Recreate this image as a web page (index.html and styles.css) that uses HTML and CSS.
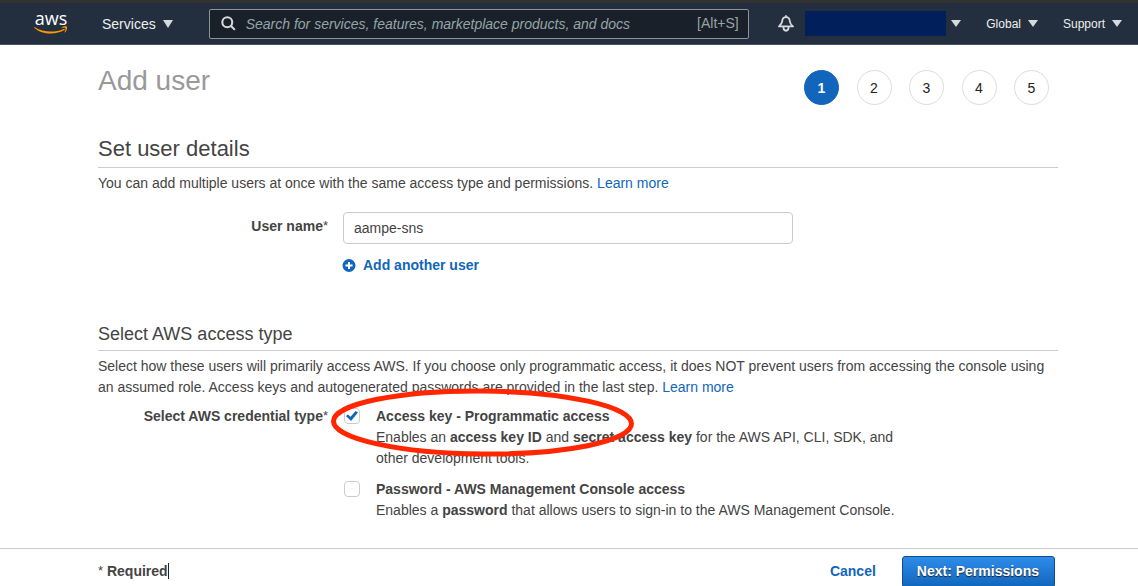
FILE: index.html
```html
<!DOCTYPE html>
<html lang="en">
<head>
  <meta charset="UTF-8" />
  <meta name="viewport" content="width=device-width, initial-scale=1.0"/>
  <title>Add user</title>
  <link rel="stylesheet" href="styles.css">
</head>
<body>

  <header class="topbar">
    <a href="#" class="logo">
      <span>aws</span>
      <svg width="34" height="9" viewBox="0 0 34 9">
        <path d="M0.8 1.2 C9 6.6 21 6.8 29.6 2.9 C30.6 2.5 31.3 3.4 30.4 4.1 C22 9.2 8 8.8 0.4 1.9 C0 1.4 0.3 0.9 0.8 1.2 Z" fill="#f90"/>
        <path d="M27.6 1.2 C29.6 0 32.4 0.2 33 0.7 C33.5 1.4 32.8 4.8 31 6.4 C30.7 6.6 30.4 6.5 30.6 6.1 C31.1 4.8 31.9 2.6 31.5 2.1 C31.1 1.5 29 1.7 27.9 1.8 C27.5 1.8 27.4 1.4 27.6 1.2 Z" fill="#f90"/>
      </svg>
    </a>
    <button class="nav-btn services">Services <i class="arrow big"></i></button>
    <div class="search">
      <svg width="15" height="15" viewBox="0 0 16 16" fill="none" stroke="#d5dbdb" stroke-width="2.2">
        <circle cx="6.7" cy="6.7" r="5.3"/>
        <path d="M10.4 10.4 L14.8 14.8"/>
      </svg>
      <input type="text" aria-label="Search" placeholder="Search for services, features, marketplace products, and docs" />
      <span>[Alt+S]</span>
    </div>
    <nav class="nav-right">
      <button class="bell" aria-label="Notifications">
        <svg width="16" height="17" viewBox="0 0 16 17" fill="none" stroke="#d5dbdb" stroke-width="1.8" stroke-linejoin="round">
          <path d="M1 11.4 C3.2 9.6 4 8.4 4.2 6.2 C4.4 3.6 5.8 2.1 8 2.1 C10.2 2.1 11.6 3.6 11.8 6.2 C12 8.4 12.8 9.6 15 11.4 Z"/>
          <path d="M8 0.2 V2 M5.4 12 C5.4 17 10.6 17 10.6 12"/>
        </svg>
      </button>
      <button class="nav-btn" aria-label="Account"><span class="account"></span><i class="arrow"></i></button>
      <button class="nav-btn">Global <i class="arrow"></i></button>
      <button class="nav-btn">Support <i class="arrow"></i></button>
    </nav>
  </header>

  <main>
    <div class="title-row">
      <h1>Add user</h1>
      <ol class="steps">
        <li class="active">1</li>
        <li>2</li>
        <li>3</li>
        <li>4</li>
        <li>5</li>
      </ol>
    </div>

    <section class="details">
      <h2>Set user details</h2>
      <p>You can add multiple users at once with the same access type and permissions. <a href="#">Learn more</a></p>
      <div class="row user-row">
        <label class="row-label" for="username">User name<sup>*</sup></label>
        <div>
          <input type="text" id="username" class="text-input" value="aampe-sns" />
          <button class="add-user">
            <svg width="14" height="14" viewBox="0 0 14 14">
              <circle cx="7" cy="6.5" r="6.5" fill="#1166bb"/>
              <path d="M7 2.9 V10.1 M3.4 6.5 H10.6" stroke="#fff" stroke-width="2"/>
            </svg>
            Add another user
          </button>
        </div>
      </div>
    </section>

    <section>
      <h3>Select AWS access type</h3>
      <p>Select how these users will primarily access AWS. If you choose only programmatic access, it does NOT prevent users from accessing the console using an assumed role. Access keys and autogenerated passwords are provided in the last step. <a href="#">Learn more</a></p>
      <div class="row type-row">
        <span class="row-label">Select AWS credential type<sup>*</sup></span>
        <div class="options">
          <div class="option">
            <input type="checkbox" id="accessKey" checked />
            <div>
              <label for="accessKey">Access key - Programmatic access</label>
              <p>Enables an <b>access key ID</b> and <b>secret access key</b> for the AWS API, CLI, SDK, and other development tools.</p>
            </div>
          </div>
          <div class="option">
            <input type="checkbox" id="password" />
            <div>
              <label for="password">Password - AWS Management Console access</label>
              <p>Enables a <b>password</b> that allows users to sign-in to the AWS Management Console.</p>
            </div>
          </div>
          <svg class="highlight" width="306" height="70" viewBox="0 0 306 70">
            <ellipse cx="152.5" cy="35.5" rx="149" ry="31.5" fill="none" stroke="#ff2600" stroke-width="5" transform="rotate(0.5 153 35)"/>
          </svg>
        </div>
      </div>
    </section>
  </main>

  <footer>
    <span class="required"><sup>*</sup> Required</span>
    <div class="actions">
      <a href="#">Cancel</a>
      <button class="primary">Next: Permissions</button>
    </div>
  </footer>

</body>
</html>
```

FILE: styles.css
```css
* {
  box-sizing: border-box;
}
html {
  overflow: hidden;
}
body {
  margin: 0;
  font-family: "Liberation Sans", Arial, sans-serif;
  font-size: 14px;
  line-height: 21px;
  color: #444;
  background: #fff;
}
h1, h2, h3, p {
  margin: 0;
  font-weight: normal;
}
a {
  color: #1166bb;
  text-decoration: none;
}
button, input {
  font-family: inherit;
  font-size: 14px;
}
button {
  padding: 0;
  border: none;
  background: none;
  cursor: pointer;
}
sup {
  font-size: 13px;
  font-weight: normal;
  line-height: 0;
  vertical-align: 1px;
}

/* top bar */
.topbar {
  display: flex;
  align-items: center;
  height: 45px;
  padding: 3px 16px 0 34px;
  background: #232f3e;
  border-top: 3px solid #333;
  border-bottom: 1px solid #4a545f;
}
.logo {
  display: flex;
  flex-direction: column;
  align-items: center;
  width: 34px;
  padding-bottom: 5px;
  color: #fff;
  font-family: "Open Sans", sans-serif;
  font-size: 18px;
  font-weight: 500;
  line-height: 16px;
}
.nav-btn {
  display: flex;
  align-items: center;
  gap: 7px;
  padding-bottom: 3px;
  color: #eee;
  font-size: 12px;
}
.services {
  margin: 0 36px 0 34px;
  font-size: 14px;
}
.arrow {
  border: 5px solid transparent;
  border-top: 7px solid #d5dbdb;
  border-bottom: 0;
}
.arrow.big {
  border-top-width: 8px;
}
.search {
  display: flex;
  align-items: center;
  flex: 1;
  max-width: 540px;
  height: 30px;
  margin-bottom: 3px;
  padding: 0 9px 0 11px;
  background: #1a2029;
  border: 1px solid #879596;
  border-radius: 2px;
  color: #95a5a6;
}
.search input {
  flex: 1;
  padding: 0 10px;
  border: none;
  outline: none;
  background: none;
  color: #fff;
}
.search input::placeholder {
  color: #95a5a6;
  font-style: italic;
}
.nav-right {
  display: flex;
  align-items: center;
  gap: 25px;
  margin-left: auto;
}
.bell {
  display: flex;
  margin-right: -14px;
  padding-bottom: 3px;
}
.account {
  width: 141px;
  height: 25px;
  margin-right: -2px;
  background: #001f5b;
}

/* content */
main {
  padding: 25px 80px 27px 98px;
}
.title-row {
  display: flex;
  justify-content: space-between;
}
h1 {
  font-size: 28px;
  line-height: 21px;
  color: #999;
}
.steps {
  display: flex;
  justify-content: space-between;
  width: 245px;
  margin: 0 9px 0 0;
  padding: 0;
  list-style: none;
}
.steps li {
  width: 35px;
  height: 35px;
  border: 1px solid #ddd;
  border-radius: 50%;
  line-height: 34px;
  text-align: center;
  color: #222;
}
.steps .active {
  background: #1166bb;
  border-color: #1166bb;
  color: #fff;
  font-weight: bold;
}
h2, h3 {
  margin-bottom: 5px;
  border-bottom: 1px solid #ccc;
}
h2 {
  padding-bottom: 4px;
  font-size: 22px;
  line-height: 28px;
}
h3 {
  padding-bottom: 4px;
  font-size: 18px;
  line-height: 24px;
}
.details {
  margin: 30px 0 46px;
}
.row {
  display: grid;
  grid-template-columns: 230px 1fr;
  column-gap: 15px;
}
.row-label {
  text-align: right;
  font-weight: bold;
}
.user-row {
  margin-top: 18px;
}
.user-row .row-label {
  padding-top: 4px;
}
.text-input {
  display: block;
  width: 100%;
  max-width: 450px;
  height: 32px;
  padding: 0 10px;
  border: 1px solid #ccc;
  border-radius: 4px;
  color: #444;
}
.add-user {
  display: flex;
  align-items: center;
  gap: 7px;
  margin: 11px 0 0 -1px;
  color: #1166bb;
  font-weight: bold;
  line-height: 21px;
}
.type-row {
  margin-top: 8px;
}
.options {
  position: relative;
  display: flex;
  flex-direction: column;
  gap: 10px;
  max-width: 570px;
}
.option {
  display: flex;
  gap: 16px;
}
.option label {
  display: block;
  font-weight: bold;
}
.option input {
  flex: none;
  appearance: none;
  width: 16px;
  height: 16px;
  margin: 2px 0 0 1px;
  border: 1px solid #ccc;
  border-radius: 4px;
  background: #fff;
}
.option input:checked::before {
  content: "";
  display: block;
  width: 12px;
  height: 10px;
  margin: 2px 1px;
  background: #1166bb;
  clip-path: polygon(0 50%, 16% 35%, 38% 58%, 80% 0, 100% 14%, 42% 100%);
}
.highlight {
  position: absolute;
  top: -19px;
  left: -13px;
  pointer-events: none;
}

/* bottom bar */
footer {
  display: flex;
  align-items: flex-start;
  justify-content: space-between;
  padding: 7px 83px 8px 98px;
  border-top: 1px solid #ccc;
  font-weight: bold;
}
.required {
  margin-top: 7px;
  border-right: 1px solid #222;
  line-height: 16px;
}
.actions {
  display: flex;
  align-items: center;
  gap: 26px;
  line-height: 30px;
}
.actions a {
  padding-bottom: 2px;
}
.primary {
  height: 32px;
  padding: 0 15px 2px 14px;
  border: 1px solid #0f4d8f;
  border-radius: 3px;
  background: linear-gradient(#2d8ceb, #1166bb);
  color: #fff;
  font-weight: bold;
  text-shadow: 0 1px 1px #222;
}
```
